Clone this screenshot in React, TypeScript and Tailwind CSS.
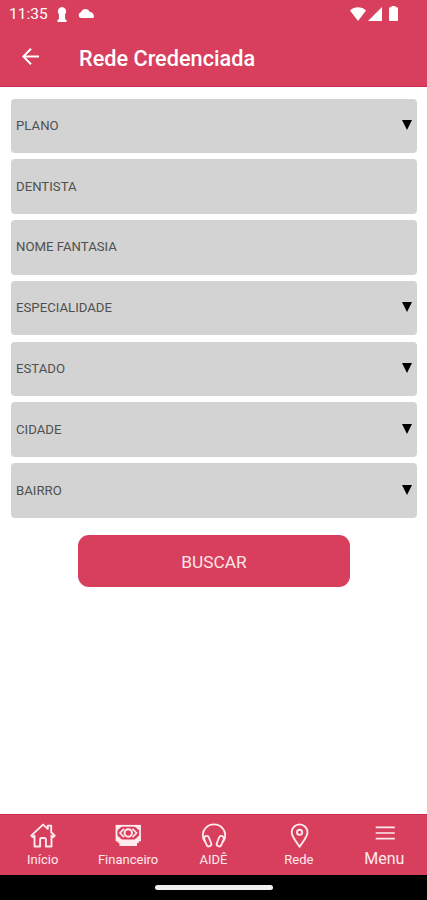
import React from 'react';

interface Field {
  label: string;
  select: boolean;
}

const fields: Field[] = [
  { label: 'PLANO', select: true },
  { label: 'DENTISTA', select: false },
  { label: 'NOME FANTASIA', select: false },
  { label: 'ESPECIALIDADE', select: true },
  { label: 'ESTADO', select: true },
  { label: 'CIDADE', select: true },
  { label: 'BAIRRO', select: true },
];

const HomeIcon = () => (
  <svg width="26" height="26" viewBox="0 0 26 26" fill="none" stroke="currentColor" strokeWidth="1.9" strokeLinejoin="round" strokeLinecap="round">
    <path d="M1.3 12.6 13 1.6l4.8 4.3V2.6h3.4v6.6l3.5 3.4-1.4 1.5-1.8-1.4v10.8h-5.6v-7a1.5 1.5 0 0 0-1.5-1.5h-2.8a1.5 1.5 0 0 0-1.5 1.5v7H4.5V12.700l-1.800 1.400z" />
  </svg>
);

const MoneyIcon = () => (
  <svg width="26" height="26" viewBox="0 0 26 26" fill="none" stroke="currentColor">
    <rect x="1.5" y="2.8" width="23.5" height="14.6" strokeWidth="1.8" />
    <path d="M2 3h5L2 7.500zM24.500 3h-5l5 4.500zM2 17v-4.500L7 17zM24.500 17v-4.500l-5 4.500z" fill="currentColor" strokeWidth=".5" />
    <path d="M9 5.800 5 10l4 4.200M17.500 5.800l4 4.200-4 4.200" strokeWidth="1.700" />
    <circle cx="13.250" cy="10" r="3.700" strokeWidth="2" />
    <path d="M2.500 17.500H24v1.800l-2 1.200v2.500H4.500v-2.500l-2-1.200z" fill="currentColor" stroke="none" />
  </svg>
);

const HeadsetIcon = () => (
  <svg width="26" height="26" viewBox="0 0 26 26" fill="none" stroke="currentColor" strokeWidth="1.8" strokeLinecap="round" strokeLinejoin="round">
    <path d="M3.800 18.500C.8 14.500 1.300 8.500 4.500 5.200c4.500-5 12.500-5 17 0 3.200 3.300 3.700 9.300.7 13.300" />
    <rect x="4.300" y="12.800" width="4.900" height="10.800" rx="2.450" transform="rotate(-22 6.750 18.200)" />
    <rect x="16.800" y="12.800" width="4.900" height="10.800" rx="2.450" transform="rotate(22 19.250 18.200)" />
  </svg>
);

const PinIcon = () => (
  <svg width="26" height="26" viewBox="0 0 26 26" fill="none" stroke="currentColor" strokeWidth="1.9" strokeLinejoin="round">
    <path d="M13.600 23.800C11.100 19.500 5.700 14.200 5.700 9.300a7.900 7.900 0 0 1 15.800 0c0 4.900-5.400 10.200-7.900 14.500z" />
    <circle cx="13.600" cy="9.300" r="2.600" />
  </svg>
);

const MenuIcon = () => (
  <svg width="26" height="26" viewBox="0 0 26 26" fill="none" stroke="currentColor" strokeWidth="1.7">
    <path d="M4.700 4.300h19.100M4.700 10h19.100M4.700 15.700h19.100" />
  </svg>
);

const tabs = [
  { label: 'Início', icon: <HomeIcon />, labelClass: 'text-[13px]' },
  { label: 'Financeiro', icon: <MoneyIcon />, labelClass: 'text-[13px]' },
  { label: 'AIDÊ', icon: <HeadsetIcon />, labelClass: 'text-[13px]' },
  { label: 'Rede', icon: <PinIcon />, labelClass: 'text-[13px]' },
  { label: 'Menu', icon: <MenuIcon />, labelClass: 'text-base' },
];

const StatusBar = () => (
  <div className="flex h-7 items-center pl-[9px] pr-[29px]">
    <span className="w-10 pt-px text-[15.5px] leading-none">11:35</span>
    <svg className="ml-2" width="10" height="15" viewBox="0 0 10 15" fill="currentColor">
      <path d="M5 0a4.300 4.300 0 0 1 3.200 7L8 12l1.500 1v2H.5v-2L2 12l-.2-5A4.300 4.300 0 0 1 5 0z" />
    </svg>
    <svg className="mb-0.5 ml-[11px]" width="16" height="9" viewBox="0 0 16 9" fill="currentColor">
      <path d="M3 9a2.900 2.900 0 0 1 0-5.700C4.500-.8 10-1.200 11.800 3 14 3 15.800 4.600 16 7.500q0 1.500-1.500 1.500z" />
    </svg>
    <div className="mb-px ml-auto flex items-center">
      <svg width="16" height="14" viewBox="0 0 16 14" fill="currentColor">
        <path d="M8 14 0 3.500C4.500-.8 11.500-.8 16 3.500z" />
      </svg>
      <svg className="ml-0.5" width="14" height="14" viewBox="0 0 14 14" fill="currentColor">
        <path d="M14 0v14H0z" />
      </svg>
      <svg className="ml-[7px]" width="9" height="15" viewBox="0 0 9 15" fill="currentColor">
        <path d="M2.500 0h4v1.200H8a1 1 0 0 1 1 1V14a1 1 0 0 1-1 1H1a1 1 0 0 1-1-1V2.200a1 1 0 0 1 1-1h1.500z" />
      </svg>
    </div>
  </div>
);

const SearchField: React.FC<{ field: Field }> = ({ field }) => (
  <div className="flex h-[54.5px] items-center justify-between rounded-[4px] bg-[#d3d3d3] px-[5px]">
    <span className="text-[13.2px] text-[#505050]">{field.label}</span>
    {field.select && (
      <svg width="10" height="10" viewBox="0 0 10 10" className="mb-0.5 fill-black">
        <path d="M0 0h10L5 10z" />
      </svg>
    )}
  </div>
);

export default function App() {
  return (
    <div className="flex h-[900px] w-full flex-col bg-white font-['Roboto',sans-serif]">
      <header className="h-[87px] border-b border-[#cb2852] bg-[#d73f5d] text-white">
        <StatusBar />
        <div className="flex h-[61px] items-center pl-[22px]">
          <svg width="17" height="17" viewBox="0 0 17 17" fill="none" stroke="currentColor" strokeWidth="2" className="mb-1">
            <path d="M17 8.500H1.500M9 .8 1.300 8.500 9 16.200" />
          </svg>
          <h1 className="ml-10 text-[21.7px] font-medium leading-[58px]">Rede Credenciada</h1>
        </div>
      </header>

      <main className="flex flex-1 flex-col pt-[11.5px] pr-[10px] pl-[11px]">
        <div className="flex flex-col gap-[6.3px]">
          {fields.map((field) => (
            <SearchField key={field.label} field={field} />
          ))}
        </div>
        <button className="mt-[17px] ml-[67px] h-[52px] w-[272px] rounded-[11px] bg-[#d73f5d] pt-1 text-[17.3px] text-[#ffe6e9]">
          BUSCAR
        </button>
      </main>

      <nav className="flex h-[61px] border-t border-[#cb2852] bg-[#d73f5d] text-[#ffeaed]">
        {tabs.map((tab) => (
          <div key={tab.label} className="flex flex-1 flex-col items-center pt-2">
            {tab.icon}
            <span className={`flex h-5 items-center leading-none ${tab.labelClass}`}>{tab.label}</span>
          </div>
        ))}
      </nav>
      <div className="flex h-[25px] justify-center bg-black pt-[10px]">
        <div className="h-[5px] w-[118px] rounded-full bg-[#f0f0f0]" />
      </div>
    </div>
  );
}
